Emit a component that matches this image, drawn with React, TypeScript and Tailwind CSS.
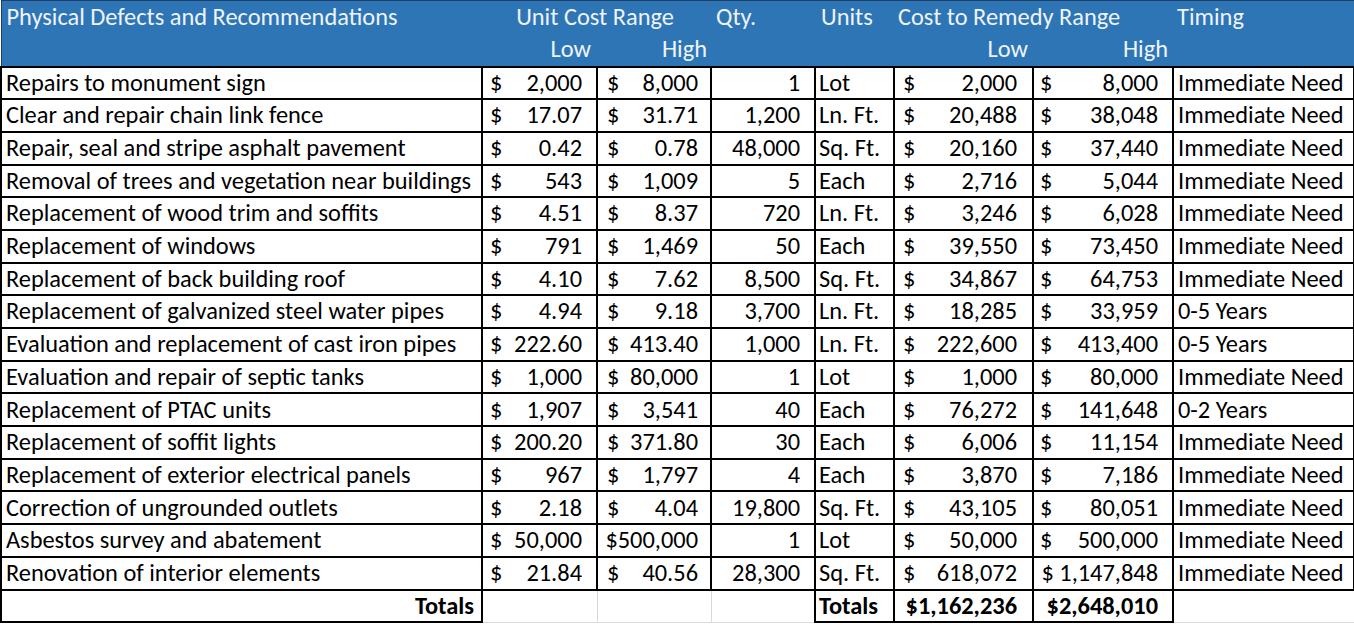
import React from 'react';

// Physical defects cost table, Excel-style sheet export

type Row = {
  item: string;
  low: string;
  high: string;
  qty: string;
  units: string;
  costLow: string;
  costHigh: string;
  timing: string;
};

const rows: Row[] = [
  { item: 'Repairs to monument sign', low: '2,000', high: '8,000', qty: '1', units: 'Lot', costLow: '2,000', costHigh: '8,000', timing: 'Immediate Need' },
  { item: 'Clear and repair chain link fence', low: '17.07', high: '31.71', qty: '1,200', units: 'Ln. Ft.', costLow: '20,488', costHigh: '38,048', timing: 'Immediate Need' },
  { item: 'Repair, seal and stripe asphalt pavement', low: '0.42', high: '0.78', qty: '48,000', units: 'Sq. Ft.', costLow: '20,160', costHigh: '37,440', timing: 'Immediate Need' },
  { item: 'Removal of trees and vegetation near buildings', low: '543', high: '1,009', qty: '5', units: 'Each', costLow: '2,716', costHigh: '5,044', timing: 'Immediate Need' },
  { item: 'Replacement of wood trim and soffits', low: '4.51', high: '8.37', qty: '720', units: 'Ln. Ft.', costLow: '3,246', costHigh: '6,028', timing: 'Immediate Need' },
  { item: 'Replacement of windows', low: '791', high: '1,469', qty: '50', units: 'Each', costLow: '39,550', costHigh: '73,450', timing: 'Immediate Need' },
  { item: 'Replacement of back building roof', low: '4.10', high: '7.62', qty: '8,500', units: 'Sq. Ft.', costLow: '34,867', costHigh: '64,753', timing: 'Immediate Need' },
  { item: 'Replacement of galvanized steel water pipes', low: '4.94', high: '9.18', qty: '3,700', units: 'Ln. Ft.', costLow: '18,285', costHigh: '33,959', timing: '0-5 Years' },
  { item: 'Evaluation and replacement of cast iron pipes', low: '222.60', high: '413.40', qty: '1,000', units: 'Ln. Ft.', costLow: '222,600', costHigh: '413,400', timing: '0-5 Years' },
  { item: 'Evaluation and repair of septic tanks', low: '1,000', high: '80,000', qty: '1', units: 'Lot', costLow: '1,000', costHigh: '80,000', timing: 'Immediate Need' },
  { item: 'Replacement of PTAC units', low: '1,907', high: '3,541', qty: '40', units: 'Each', costLow: '76,272', costHigh: '141,648', timing: '0-2 Years' },
  { item: 'Replacement of soffit lights', low: '200.20', high: '371.80', qty: '30', units: 'Each', costLow: '6,006', costHigh: '11,154', timing: 'Immediate Need' },
  { item: 'Replacement of exterior electrical panels', low: '967', high: '1,797', qty: '4', units: 'Each', costLow: '3,870', costHigh: '7,186', timing: 'Immediate Need' },
  { item: 'Correction of ungrounded outlets', low: '2.18', high: '4.04', qty: '19,800', units: 'Sq. Ft.', costLow: '43,105', costHigh: '80,051', timing: 'Immediate Need' },
  { item: 'Asbestos survey and abatement', low: '50,000', high: '$500,000', qty: '1', units: 'Lot', costLow: '50,000', costHigh: '500,000', timing: 'Immediate Need' },
  { item: 'Renovation of interior elements', low: '21.84', high: '40.56', qty: '28,300', units: 'Sq. Ft.', costLow: '618,072', costHigh: '$ 1,147,848', timing: 'Immediate Need' },
];

const cell = 'border-2 border-black h-[32.7px] p-0 align-middle whitespace-nowrap';

function Money({ value, left, right }: { value: string; left: string; right: string }) {
  // values already carrying their own "$" are shown as one right-aligned string
  if (value.startsWith('$')) {
    return <div className={`text-right ${right}`}>{value}</div>;
  }
  return (
    <div className={`flex justify-between ${left} ${right}`}>
      <span>$</span>
      <span>{value}</span>
    </div>
  );
}

export default function App() {
  return (
    <div className="w-[1354px] h-[625px] bg-white overflow-hidden text-black" style={{ fontFamily: 'Carlito, Lato, "Liberation Sans", sans-serif' }}>
      <table className="table-fixed border-collapse text-[24.4px] leading-none w-[1353px]">
        <colgroup>
          <col className="w-[481px]" />
          <col className="w-[115px]" />
          <col className="w-[114px]" />
          <col className="w-[104px]" />
          <col className="w-[79px]" />
          <col className="w-[139px]" />
          <col className="w-[140px]" />
          <col className="w-[181px]" />
        </colgroup>
        <thead className="bg-[#2e75b6] text-[#eef3fa] font-normal">
          <tr className="h-[33px]">
            <th className="font-normal text-left pl-[5px] border-l border-t border-[#1f3f66]">Physical Defects and Recommendations</th>
            <th colSpan={2} className="font-normal text-center pr-[3px] border-t border-[#1f3f66]">Unit Cost Range</th>
            <th className="font-normal text-left pl-[5px] border-t border-[#1f3f66]">Qty.</th>
            <th className="font-normal text-left pl-[6px] border-t border-[#1f3f66]">Units</th>
            <th colSpan={2} className="font-normal text-left pl-[4px] border-t border-[#1f3f66]">Cost to Remedy Range</th>
            <th className="font-normal text-left pl-[4px] border-t border-[#1f3f66]">Timing</th>
          </tr>
          <tr className="h-[33px]">
            <th className="border-l border-[#1f3f66]" />
            <th className="font-normal text-right pr-[6px]">Low</th>
            <th className="font-normal text-right pr-[4px]">High</th>
            <th />
            <th />
            <th className="font-normal text-right pr-[5px]">Low</th>
            <th className="font-normal text-right pr-[5px]">High</th>
            <th />
          </tr>
        </thead>
        <tbody>
          {rows.map((r) => (
            <tr key={r.item}>
              <td className={`${cell} pl-[4px]`}>{r.item}</td>
              <td className={cell}><Money value={r.low} left="pl-[7px]" right="pr-[14px]" /></td>
              <td className={cell}><Money value={r.high} left="pl-[9px]" right="pr-[12px]" /></td>
              <td className={`${cell} text-right pr-[14px]`}>{r.qty}</td>
              <td className={`${cell} pl-[3px]`}>{r.units}</td>
              <td className={cell}><Money value={r.costLow} left="pl-[8px]" right="pr-[15px]" /></td>
              <td className={cell}><Money value={r.costHigh} left="pl-[6px]" right="pr-[14px]" /></td>
              <td className={`${cell} pl-[4px]`}>{r.timing}</td>
            </tr>
          ))}
          <tr>
            <td className={`${cell} text-right pr-[7px] font-bold`}>Totals</td>
            <td className="border border-[#d9d9d9] border-t-2 border-t-black" />
            <td className="border border-[#d9d9d9] border-t-2 border-t-black" />
            <td className="border border-[#d9d9d9] border-t-2 border-t-black" />
            <td className={`${cell} pl-[3px] font-bold`}>Totals</td>
            <td className={`${cell} text-right pr-[15px] font-bold`}>$1,162,236</td>
            <td className={`${cell} text-right pr-[14px] font-bold`}>$2,648,010</td>
            <td className="border border-[#d9d9d9] border-t-2 border-t-black border-l-2 border-l-black" />
          </tr>
        </tbody>
      </table>
    </div>
  );
}
